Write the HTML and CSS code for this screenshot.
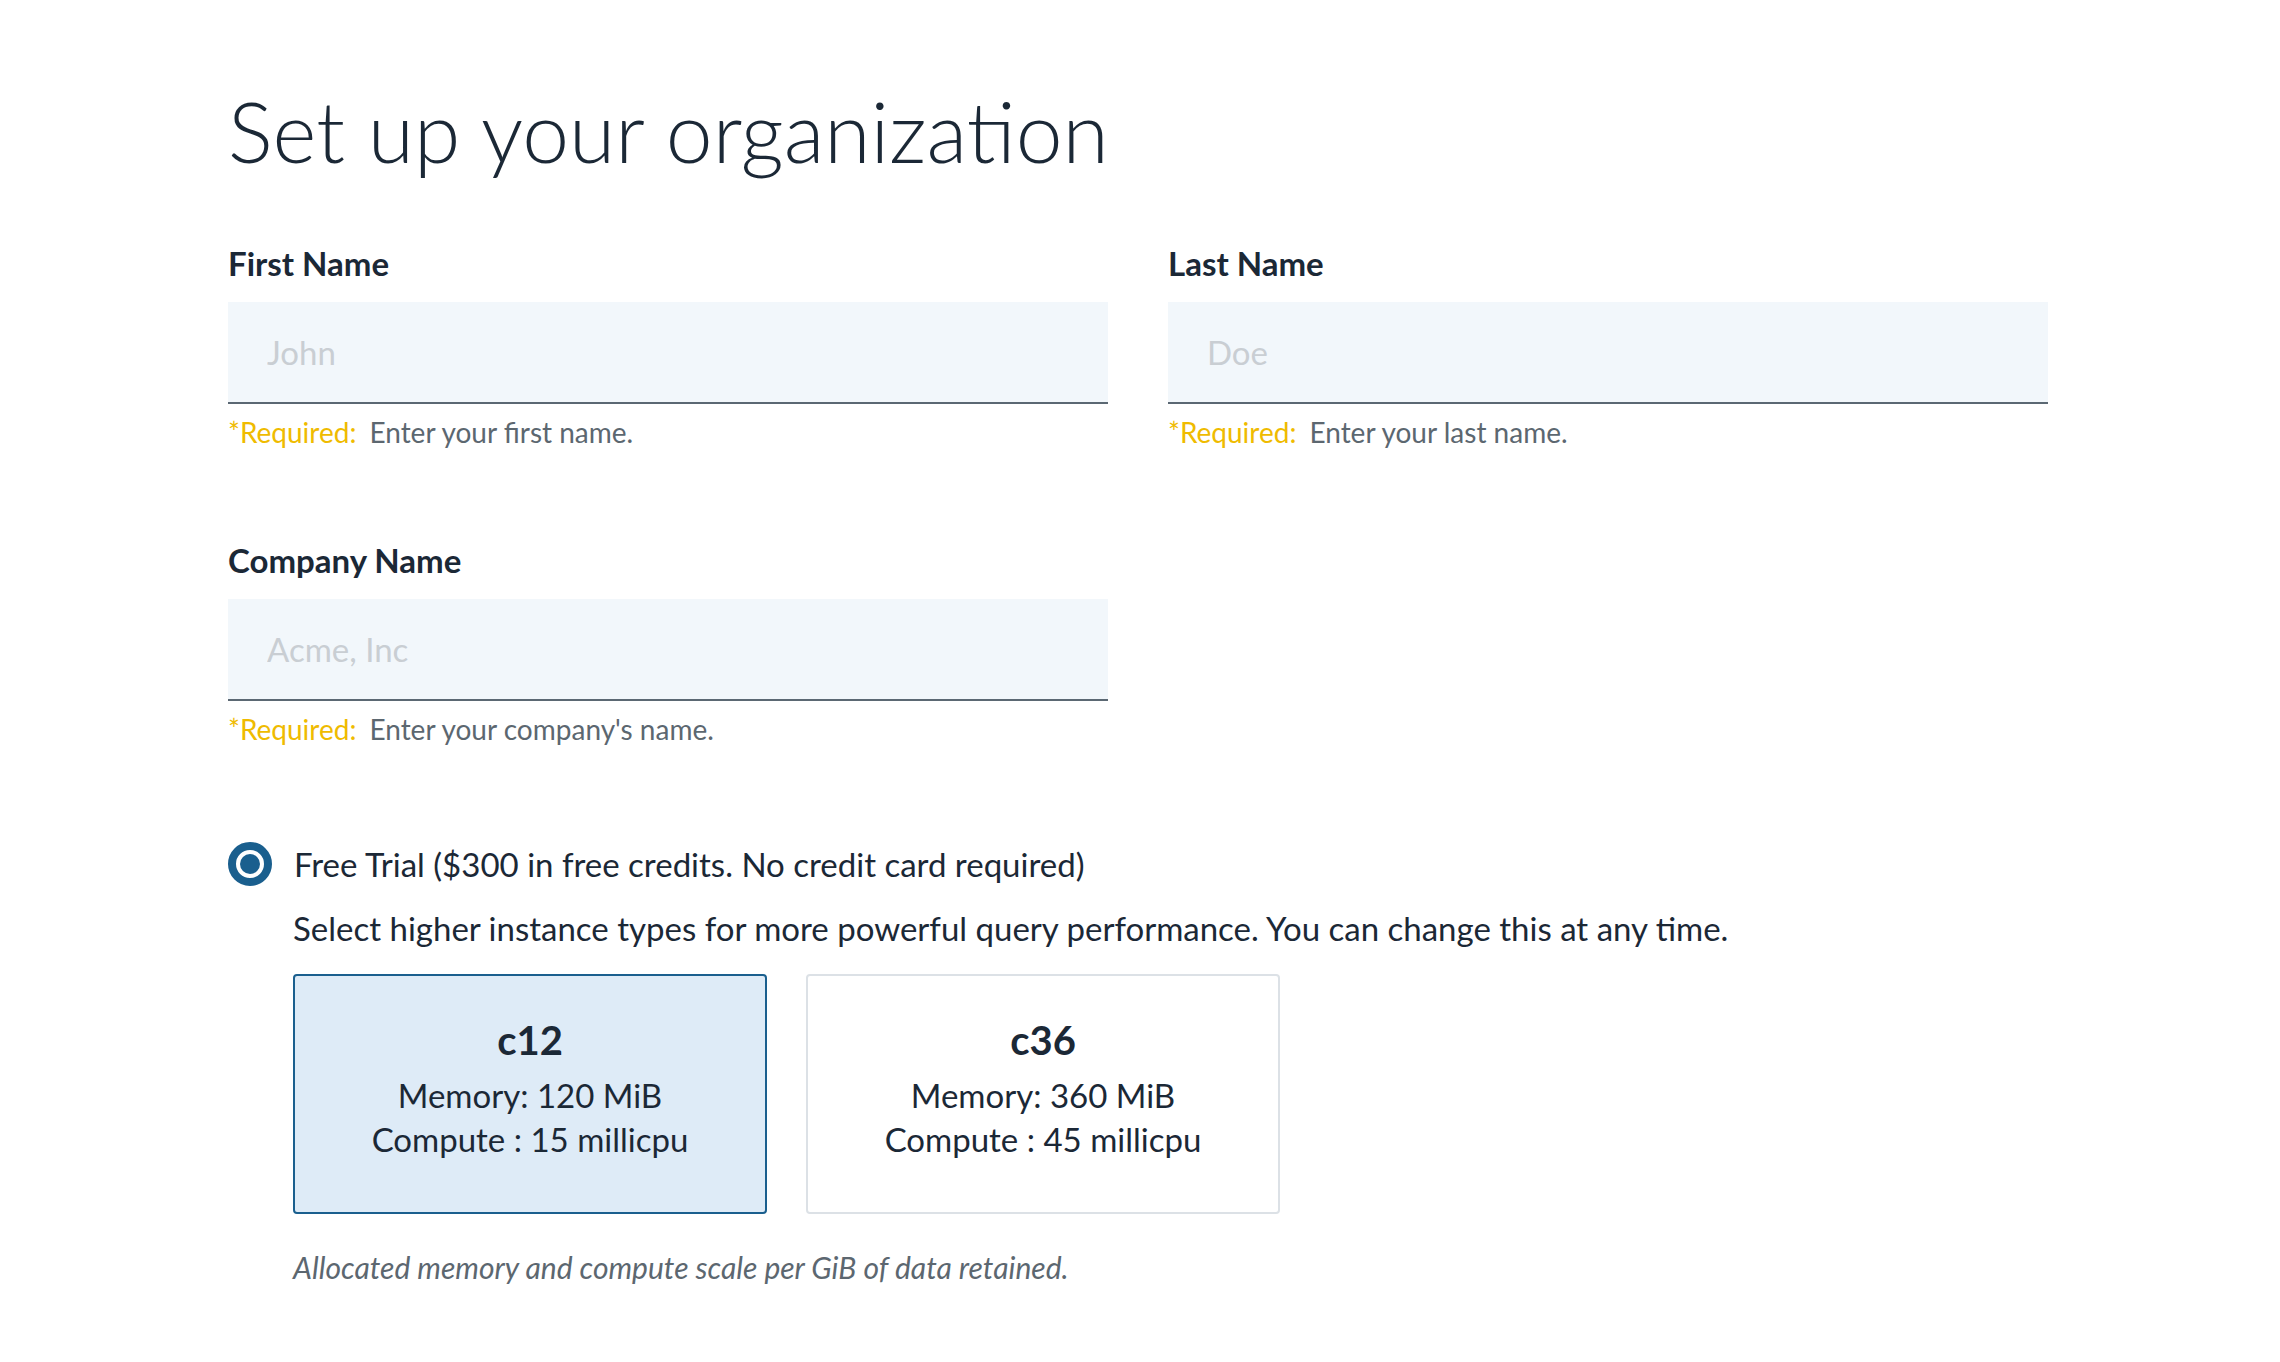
FILE: index.html
```html
<!DOCTYPE html>
<html lang="en">
<head>
<meta charset="utf-8">
<title>Set up your organization</title>
<link rel="stylesheet" href="styles.css">
</head>
<body>
<main class="page">
  <h1 class="title">Set up your organization</h1>
  <form class="form">
    <div class="grid">
      <div class="field">
        <label class="label" for="first">First Name</label>
        <input class="input" id="first" type="text" placeholder="John">
        <p class="help"><span class="req">*Required:</span>Enter your first name.</p>
      </div>
      <div class="field">
        <label class="label" for="last">Last Name</label>
        <input class="input" id="last" type="text" placeholder="Doe">
        <p class="help"><span class="req">*Required:</span>Enter your last name.</p>
      </div>
      <div class="field field-company">
        <label class="label" for="company">Company Name</label>
        <input class="input" id="company" type="text" placeholder="Acme, Inc">
        <p class="help"><span class="req">*Required:</span>Enter your company's name.</p>
      </div>
    </div>

    <div class="plan">
      <div class="radio-row">
        <span class="radio" aria-hidden="true"></span>
        <span class="radio-label">Free Trial ($300 in free credits. No credit card required)</span>
      </div>
      <div class="plan-body">
        <p class="plan-desc">Select higher instance types for more powerful query performance. You can change this at any time.</p>
        <div class="cards">
          <div class="card card-selected">
            <div class="card-name">c12</div>
            <div class="card-line">Memory: 120 MiB</div>
            <div class="card-line">Compute : 15 millicpu</div>
          </div>
          <div class="card">
            <div class="card-name">c36</div>
            <div class="card-line">Memory: 360 MiB</div>
            <div class="card-line">Compute : 45 millicpu</div>
          </div>
        </div>
        <p class="note">Allocated memory and compute scale per GiB of data retained.</p>
      </div>
    </div>
  </form>
</main>
</body>
</html>
```
FILE: styles.css
```css
* { box-sizing: border-box; }

html, body {
  margin: 0;
  padding: 0;
  background: #ffffff;
}

body {
  font-family: "Lato", "Open Sans", sans-serif;
  color: #1b2836;
}

.page {
  padding: 81px 0 0 228px;
  width: 2048px;
}

.title {
  margin: 0;
  font-size: 84px;
  font-weight: 300;
  line-height: 100px;
  color: #1b2836;
}

.form {
  margin: 62px 0 0;
}

.grid {
  display: grid;
  grid-template-columns: 880px 880px;
  column-gap: 60px;
  row-gap: 91px;
}

.field {
  display: flex;
  flex-direction: column;
}

.label {
  font-size: 33px;
  font-weight: 700;
  line-height: 40px;
  color: #1b2836;
}

.input {
  margin-top: 19px;
  width: 100%;
  height: 102px;
  padding: 0 0 0 39px;
  border: none;
  border-bottom: 2px solid #5b6873;
  border-radius: 0;
  background: #f2f7fb;
  font-family: "Lato", "Open Sans", sans-serif;
  font-size: 33px;
  color: #1b2836;
  outline: none;
}

.input::placeholder {
  color: #c9ced3;
}

.help {
  margin: 11px 0 0;
  font-size: 28px;
  line-height: 34px;
  color: #5c6770;
}

.req {
  color: #efbb00;
  margin-right: 13px;
}

.plan {
  margin-top: 94px;
}

.radio-row {
  display: flex;
  align-items: center;
  gap: 22px;
  height: 48px;
}

.radio {
  flex: none;
  width: 44px;
  height: 44px;
  border-radius: 50%;
  border: 8px solid #1a5f8e;
  display: flex;
  align-items: center;
  justify-content: center;
}

.radio::after {
  content: "";
  width: 20px;
  height: 20px;
  border-radius: 50%;
  background: #1a5f8e;
}

.radio-label {
  font-size: 33px;
  line-height: 48px;
  color: #1b2836;
}

.plan-body {
  padding-left: 65px;
}

.plan-desc {
  margin: 20px 0 0;
  font-size: 33px;
  line-height: 40px;
  color: #1b2836;
}

.cards {
  display: flex;
  gap: 39px;
  margin-top: 26px;
}

.card {
  width: 474px;
  height: 240px;
  padding-top: 40px;
  border: 2px solid #dce1e6;
  border-radius: 4px;
  background: #ffffff;
  text-align: center;
  color: #1b2836;
}

.card-selected {
  border-color: #1a5f8e;
  background: #deebf7;
}

.card-name {
  font-size: 40px;
  font-weight: 700;
  line-height: 48px;
  margin-bottom: 9px;
}

.card-line {
  font-size: 33px;
  line-height: 44px;
}

.note {
  margin: 35px 0 0;
  font-size: 30px;
  font-style: italic;
  line-height: 36px;
  color: #5c6770;
}
```
